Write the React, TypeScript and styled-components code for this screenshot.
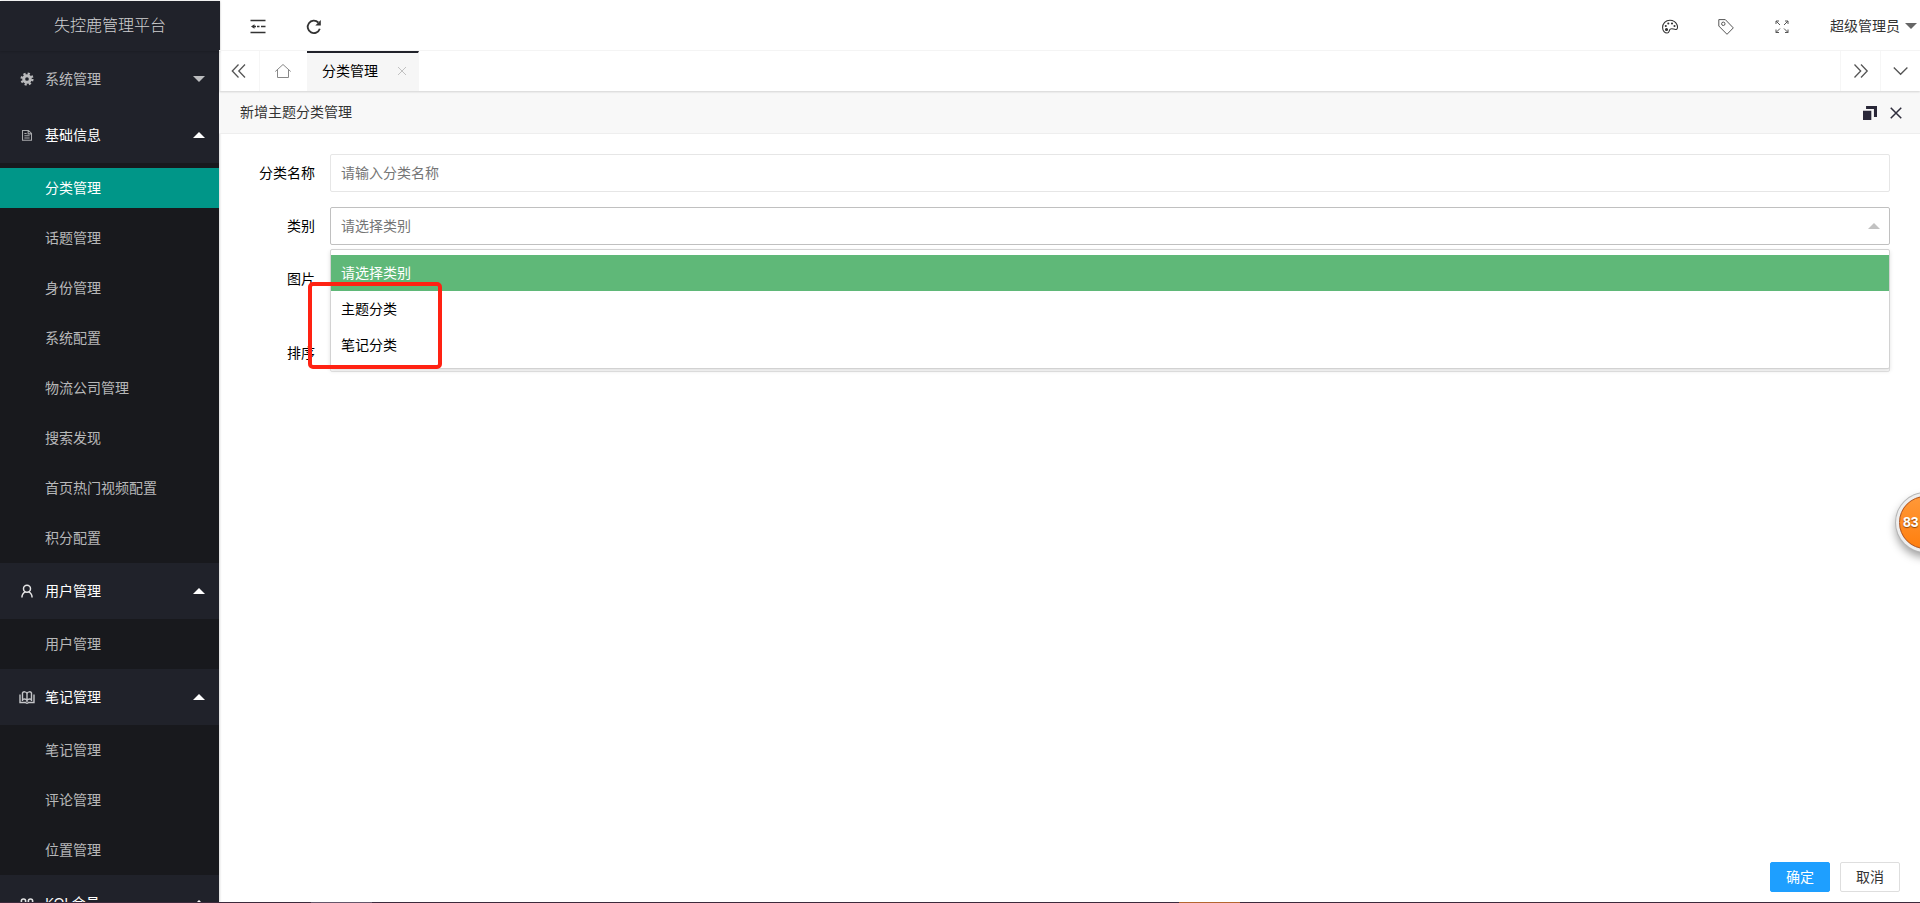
import React from 'react';
import styled, { createGlobalStyle, css } from 'styled-components';

const GlobalStyle = createGlobalStyle`
  * {
    box-sizing: border-box;
  }

  body {
    margin: 0;
    background: #fff;
    overflow: hidden;
    font: 14px/24px 'Noto Sans', 'Noto Sans CJK SC', sans-serif;
    color: #000;
  }

  svg {
    display: block;
    flex: none;
  }
`;

const Screen = styled.div`
  position: relative;
  display: flex;
  flex-direction: column;
  width: 1920px;
  height: 903px;
  padding-top: 1px;
  overflow: hidden;
`;

const Layout = styled.div`
  display: flex;
  flex: 1;
  min-height: 0;
`;

const Sidebar = styled.aside`
  width: 219px;
  flex: none;
  background: #20222a;
  box-shadow: 1px 0 2px rgba(0, 0, 0, 0.15);
`;

const Logo = styled.div`
  width: 220px;
  height: 50px;
  padding-bottom: 2px;
  display: flex;
  align-items: center;
  justify-content: center;
  background: #20222a;
  font-size: 16px;
  font-weight: 300;
  color: rgba(255, 255, 255, 0.8);
  box-shadow: 0 1px 2px rgba(0, 0, 0, 0.15);
`;

const GroupTitle = styled.div<{ $open: boolean }>`
  display: flex;
  align-items: center;
  height: 56px;
  padding: 0 14px 0 20px;
  color: ${p => (p.$open ? '#fff' : 'rgba(255, 255, 255, 0.7)')};
`;

const GroupIcon = styled.span`
  display: flex;
  justify-content: center;
  width: 14px;
  margin-right: 11px;
`;

const GroupName = styled.span`
  flex: 1;
`;

const Arrow = styled.i<{ $up?: boolean; $color: string }>`
  display: block;
  width: 0;
  height: 0;
  border: 6px solid transparent;
  ${p =>
    p.$up
      ? css`
          border-top: 0;
          border-bottom-color: ${p.$color};
        `
      : css`
          border-bottom: 0;
          border-top-color: ${p.$color};
        `}
`;

const SubMenu = styled.div`
  background: #18191d;
`;

const SubItem = styled.div`
  padding: 5px 0;
`;

const SubLink = styled.a<{ $active?: boolean }>`
  display: block;
  height: 40px;
  padding-left: 45px;
  line-height: 40px;
  color: ${p => (p.$active ? '#fff' : 'rgba(255, 255, 255, 0.7)')};
  background: ${p => (p.$active ? '#009688' : 'transparent')};
`;

const Main = styled.main`
  flex: 1;
  min-width: 0;
  display: flex;
  flex-direction: column;
`;

const Header = styled.header`
  display: flex;
  align-items: center;
  justify-content: space-between;
  height: 50px;
  padding: 2px 3px 0 31px;
  border-bottom: 1px solid #f6f6f6;
  color: #333;
`;

const HeaderGroup = styled.div`
  display: flex;
  align-items: center;
  gap: 40px;
`;

const UserMenu = styled.div`
  display: flex;
  align-items: center;
  gap: 5px;
  padding-bottom: 2px;
`;

const TabBar = styled.div`
  display: flex;
  height: 40px;
  box-shadow: 0 1px 2px rgba(0, 0, 0, 0.15);
  z-index: 1;
`;

const TabControl = styled.div<{ $side: 'left' | 'right' }>`
  display: flex;
  align-items: center;
  justify-content: center;
  width: ${p => (p.$side === 'left' ? 41 : 40)}px;
  border-${p => (p.$side === 'left' ? 'right' : 'left')}: 1px solid #f6f6f6;
`;

const HomeTab = styled.div`
  display: flex;
  align-items: center;
  justify-content: center;
  width: 47px;
  padding-right: 1px;
`;

const ActiveTab = styled.div`
  display: flex;
  align-items: center;
  gap: 20px;
  width: 112px;
  margin-right: auto;
  padding: 0 0 2px 15px;
  border-top: 2px solid #20222a;
  border-right: 1px solid #f6f6f6;
  background: #f6f6f6;
`;

const DialogTitle = styled.div`
  display: flex;
  align-items: center;
  justify-content: space-between;
  height: 43px;
  padding: 0 18px 0 21px;
  border-bottom: 1px solid #eee;
  background: #f8f8f8;
  color: #333;
`;

const WindowButtons = styled.div`
  display: flex;
  align-items: center;
  gap: 13px;
  padding-top: 2px;
`;

const Form = styled.form`
  flex: 1;
  padding: 20px 30px 0 0;
`;

const FormRow = styled.div<{ $height?: number }>`
  display: flex;
  height: ${p => p.$height ?? 38}px;
  margin-bottom: 15px;
`;

const Label = styled.label`
  flex: none;
  width: 111px;
  height: 38px;
  padding-right: 15px;
  line-height: 38px;
  text-align: right;
`;

const Field = styled.div`
  position: relative;
  flex: 1;
`;

const Input = styled.input<{ $focused?: boolean }>`
  display: block;
  width: 100%;
  height: 38px;
  padding: 0 0 2px 10px;
  border: 1px solid ${p => (p.$focused ? '#c0c0c0' : '#e6e6e6')};
  border-radius: 2px;
  outline: none;
  font: inherit;

  &::placeholder {
    color: #757575;
  }
`;

const SelectArrow = styled.span`
  position: absolute;
  top: 16px;
  right: 10px;
`;

const Options = styled.div`
  position: absolute;
  top: 42px;
  left: 0;
  z-index: 2;
  width: 100%;
  padding: 5px 0;
  border: 1px solid #d2d2d2;
  border-radius: 2px;
  background: #fff;
  box-shadow: 0 2px 4px rgba(0, 0, 0, 0.12);
`;

const Option = styled.div<{ $selected?: boolean }>`
  height: 36px;
  padding: 0 10px;
  line-height: 36px;
  color: ${p => (p.$selected ? '#fff' : '#000')};
  background: ${p => (p.$selected ? '#5fb878' : '#fff')};
`;

const Footer = styled.footer`
  display: flex;
  justify-content: flex-end;
  gap: 10px;
  padding: 0 20px 10px;
`;

const FooterButton = styled.button<{ $primary?: boolean }>`
  width: 60px;
  height: 30px;
  padding: 0;
  border: 1px solid ${p => (p.$primary ? '#1e9fff' : '#dedede')};
  border-radius: 2px;
  background: ${p => (p.$primary ? '#1e9fff' : '#fff')};
  color: ${p => (p.$primary ? '#fff' : '#333')};
  font: inherit;
  line-height: 28px;
`;

const Highlight = styled.div`
  position: absolute;
  top: 282px;
  left: 308px;
  z-index: 5;
  width: 134px;
  height: 87px;
  border: 4px solid #ff2213;
  border-radius: 5px;
`;

const FloatingBall = styled.div`
  position: absolute;
  top: 496px;
  right: -32px;
  z-index: 5;
  width: 53px;
  height: 53px;
  padding-left: 3px;
  border: 1px solid #b4531a;
  border-radius: 50%;
  background: linear-gradient(#ff9838, #ff7f0e);
  box-shadow: 0 0 0 3px #eee, 0 0 0 4px #b5b5b5, 0 5px 10px 3px rgba(0, 0, 0, 0.4);
  color: #fff;
  font: bold 14px/50px 'Liberation Sans', sans-serif;
  text-shadow: 0 1px 1px rgba(90, 40, 0, 0.7);
`;

const Taskbar = styled.div`
  display: flex;
  justify-content: space-between;
  flex: none;
  height: 1px;
  padding: 0 680px 0 311px;
  background: #3c2a3c;
`;

const TaskbarItem = styled.span<{ $color: string }>`
  width: 61px;
  background: ${p => p.$color};
`;

interface IconProps {
  size?: number;
  color?: string;
  width?: number;
  children: React.ReactNode;
}

const Icon: React.FC<IconProps> = ({ size = 16, color = '#333', width = 1, children }) => (
  <svg
    width={size}
    height={size}
    viewBox="0 0 16 16"
    fill="none"
    stroke={color}
    strokeWidth={width}
  >
    {children}
  </svg>
);

const GearIcon = () => (
  <Icon size={14} color="#b9babc" width={3.4}>
    <circle cx="8" cy="8" r="3.8" />
    <circle cx="8" cy="8" r="6.2" strokeWidth="2.6" strokeDasharray="2.5 2.37" />
  </Icon>
);

const FileIcon = () => (
  <Icon size={12} color="#a9aaad" width={1.4}>
    <path d="M2 2h8l4 4v9H2zM9.500 2v4.500H14M4.500 6h3M4.500 9h7M4.500 12h7" />
  </Icon>
);

const UserIcon = () => (
  <Icon size={14} color="#e4e4e5" width={1.7}>
    <circle cx="8" cy="5.500" r="4" />
    <path d="M2.200 15.300c0-3.300 1.800-5.300 4-6.300M13.800 15.300c0-3.300-1.800-5.300-4-6.300" />
  </Icon>
);

const BookIcon = () => (
  <Icon size={16} color="#c4c5c8" width={1.4}>
    <path d="M8 4.500C7.500 2.500 4 2.200 3.500 4v8M8 4.500c.5-2 4-2.300 4.500-.5v8M8 4.500V13M3.500 10.500c1.500-.8 3.500-.5 4.500.8 1-1.300 3-1.600 4.500-.8M1 5.500v8h5.500c.5.900 2.500.9 3 0H15v-8" />
  </Icon>
);

const VipIcon = () => (
  <Icon size={14} color="#e4e4e5" width={1.8}>
    <circle cx="4" cy="6" r="2.500" />
    <circle cx="12" cy="6" r="2.500" />
  </Icon>
);

interface MenuGroup {
  name: string;
  icon: React.ReactNode;
  open: boolean;
  items: string[];
}

const menu: MenuGroup[] = [
  { name: '系统管理', icon: <GearIcon />, open: false, items: [] },
  {
    name: '基础信息',
    icon: <FileIcon />,
    open: true,
    items: [
      '分类管理',
      '话题管理',
      '身份管理',
      '系统配置',
      '物流公司管理',
      '搜索发现',
      '首页热门视频配置',
      '积分配置',
    ],
  },
  { name: '用户管理', icon: <UserIcon />, open: true, items: ['用户管理'] },
  {
    name: '笔记管理',
    icon: <BookIcon />,
    open: true,
    items: ['笔记管理', '评论管理', '位置管理'],
  },
  { name: 'KOL会员', icon: <VipIcon />, open: true, items: [] },
];

const options = ['请选择类别', '主题分类', '笔记分类'];

const SideMenu = () => (
  <Sidebar>
    <Logo>失控鹿管理平台</Logo>
    {menu.map(group => (
      <div key={group.name}>
        <GroupTitle $open={group.open}>
          <GroupIcon>{group.icon}</GroupIcon>
          <GroupName>{group.name}</GroupName>
          <Arrow $up={group.open} $color={group.open ? '#fff' : '#bcbdbf'} />
        </GroupTitle>
        <SubMenu>
          {group.items.map(item => (
            <SubItem key={item}>
              <SubLink $active={item === '分类管理'}>{item}</SubLink>
            </SubItem>
          ))}
        </SubMenu>
      </div>
    ))}
  </Sidebar>
);

const TopBar = () => (
  <Header>
    <HeaderGroup>
      <Icon width={1.3}>
        <path d="M.5 1.500h15M7 7.500h2.500M11 7.500h4.500M.5 13.500h15" />
        <path d="M1 7.500l3.500-2.300v4.600z" fill="#333" stroke="none" />
        <path d="M4 7.500h2" />
      </Icon>
      <Icon width={1.8}>
        <path d="M13.800 9.800A6.200 6.200 0 1 1 12.300 3.500" />
        <path d="M14.800 1v5.500H9.300z" fill="#333" stroke="none" />
      </Icon>
    </HeaderGroup>
    <HeaderGroup>
      <Icon color="#333" width={1.1}>
        <path d="M8 1.200C3.500 1.200.6 4.800.6 8.600c0 3.500 2.300 5.400 4.500 5.400 2.600 0 1.600-2.700 3.200-3.900 1.900-1.400 3.900 1 6 .3C17.200 9.500 15 1.200 8 1.200z" />
        <circle cx="4.500" cy="10.500" r="1" fill="#333" />
        <circle cx="3.800" cy="7" r=".5" />
        <circle cx="6.300" cy="4.500" r=".5" />
        <circle cx="10" cy="4.500" r=".5" />
        <circle cx="12.500" cy="7" r=".5" />
      </Icon>
      <Icon color="#555">
        <path d="M.8.600h6.500l8 8.300-6.300 6.400L.8 7z" strokeLinejoin="round" />
        <circle cx="5.300" cy="4.800" r="1.700" />
      </Icon>
      <Icon color="#555">
        <path d="M2 5V2h3M2 2l4 4M11 2h3v3M14 2l-4 4M2 10.500v3h3M2 13.500l4-4M11 13.500h3v-3M14 13.500l-4-4" />
      </Icon>
      <UserMenu>
        <span>超级管理员</span>
        <Arrow $color="#666" />
      </UserMenu>
    </HeaderGroup>
  </Header>
);

const Tabs = () => (
  <TabBar>
    <TabControl $side="left">
      <Icon color="#555" width={1.3}>
        <path d="M7.500 1.500L1.300 8l6.200 6.500M14 1.500L7.800 8l6.200 6.500" />
      </Icon>
    </TabControl>
    <HomeTab>
      <Icon color="#888">
        <path d="M.3 8.500L8 1.500l7.700 7M2.500 7v7.500h11V7" />
      </Icon>
    </HomeTab>
    <ActiveTab>
      分类管理
      <Icon size={8} color="#bbb" width={1.8}>
        <path d="M0 0l16 16M16 0L0 16" />
      </Icon>
    </ActiveTab>
    <TabControl $side="right">
      <Icon color="#555" width={1.3}>
        <path d="M1.500 1.500L7.700 8l-6.200 6.500M8 1.500L14.200 8 8 14.500" />
      </Icon>
    </TabControl>
    <TabControl $side="right">
      <Icon color="#555" width={1.3}>
        <path d="M.8 4.500l6.800 6.800 6.800-6.800" />
      </Icon>
    </TabControl>
  </TabBar>
);

export default function App() {
  return (
    <>
      <GlobalStyle />
      <Screen>
        <Layout>
          <SideMenu />
          <Main>
            <TopBar />
            <Tabs />
            <DialogTitle>
              新增主题分类管理
              <WindowButtons>
                <Icon size={14} color="none">
                  <path d="M0 5.500h9.500V16H0zM3.500 0H16v12.500h-3.500V3.500h-9z" fill="#292738" />
                </Icon>
                <Icon size={12} color="#2e2d3c" width={2}>
                  <path d="M1 1l14 14M15 1L1 15" />
                </Icon>
              </WindowButtons>
            </DialogTitle>
            <Form>
              <FormRow>
                <Label>分类名称</Label>
                <Field>
                  <Input placeholder="请输入分类名称" />
                </Field>
              </FormRow>
              <FormRow>
                <Label>类别</Label>
                <Field>
                  <Input $focused placeholder="请选择类别" readOnly />
                  <SelectArrow>
                    <Arrow $up $color="#c2c2c2" />
                  </SelectArrow>
                  <Options>
                    {options.map((option, i) => (
                      <Option key={option} $selected={i === 0}>
                        {option}
                      </Option>
                    ))}
                  </Options>
                </Field>
              </FormRow>
              <FormRow $height={59}>
                <Label>图片</Label>
              </FormRow>
              <FormRow>
                <Label>排序</Label>
                <Field>
                  <Input />
                </Field>
              </FormRow>
            </Form>
            <Footer>
              <FooterButton $primary>确定</FooterButton>
              <FooterButton>取消</FooterButton>
            </Footer>
          </Main>
        </Layout>
        <Taskbar>
          <TaskbarItem $color="#65566a" />
          <TaskbarItem $color="#b5662f" />
        </Taskbar>
        <Highlight />
        <FloatingBall>83</FloatingBall>
      </Screen>
    </>
  );
}
